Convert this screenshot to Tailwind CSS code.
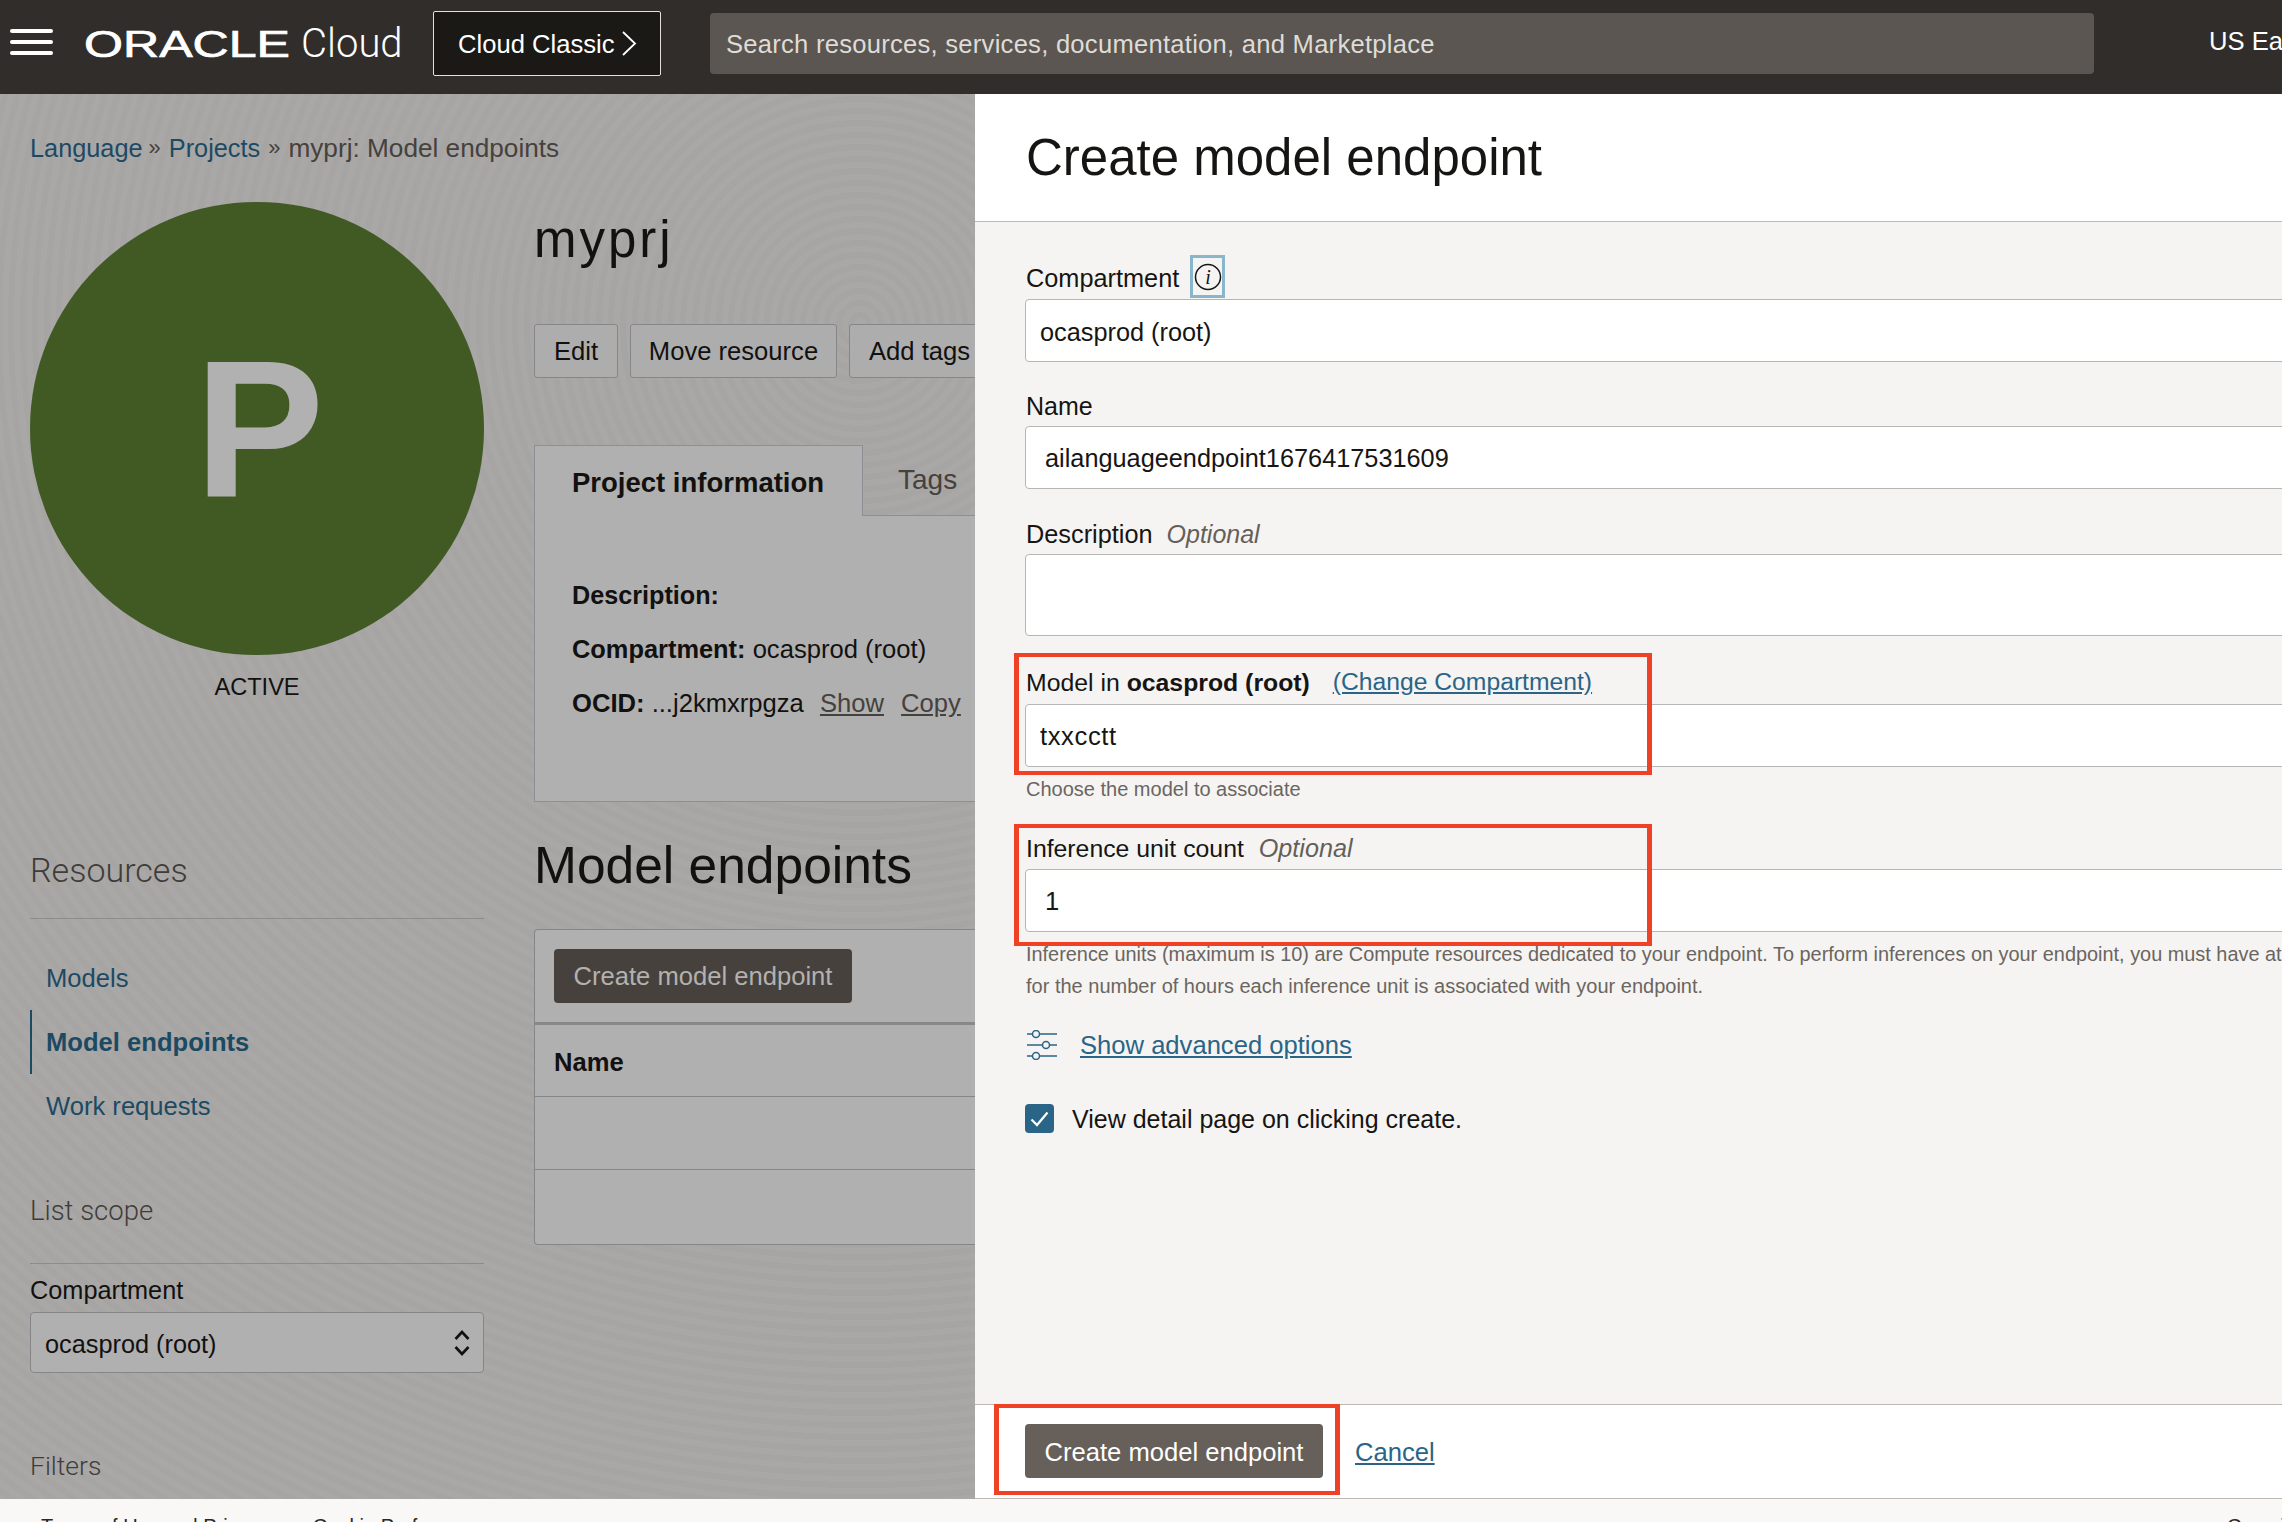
<!DOCTYPE html>
<html lang="en">

<head>
  <meta charset="UTF-8">
  <meta name="viewport" content="width=device-width, initial-scale=1.0">
  <title>Create model endpoint</title>
  <script src="https://cdn.jsdelivr.net/npm/@tailwindcss/browser@4"></script>
</head>

<body class="h-[1522px] w-[2282px] overflow-hidden flex flex-col bg-[#f9f8f6] text-[#161513] text-[25.6px] leading-[30px] font-['Liberation_Sans',Arial,sans-serif]">

  <!-- top bar -->
  <header class="h-[94px] shrink-0 flex items-center bg-[#312d2a] text-white overflow-hidden">
    <div class="ml-[10px] mb-[10px] w-[43px] shrink-0 flex flex-col gap-[7.5px]">
      <span class="h-[3.5px] rounded-full bg-white"></span>
      <span class="h-[3.5px] rounded-full bg-white"></span>
      <span class="h-[3.5px] rounded-full bg-white"></span>
    </div>
    <svg class="ml-[31px] mb-[6px] shrink-0" width="206" height="44" viewBox="0 0 206 44">
      <text x="0" y="35" textLength="206" lengthAdjust="spacingAndGlyphs" font-size="36" font-weight="400" stroke="#fff" stroke-width="0.7" fill="#fff" font-family="Liberation Sans">ORACLE</text>
    </svg>
    <span class="ml-[11px] mb-[6px] w-[132px] shrink-0 text-[40px] leading-[44px] font-light font-['Roboto',sans-serif]">Cloud</span>
    <div class="w-[228px] h-[65px] mb-[7px] shrink-0 flex items-center pl-[24px] rounded-[2px] border border-[#e4e1dc] bg-[#1b1916]">
      <span class="whitespace-nowrap">Cloud Classic</span>
      <svg class="ml-[7px]" width="16" height="25" viewBox="0 0 16 25" fill="none" stroke="#fff" stroke-width="1.8"><path d="M2 1l12 11.500L2 24" /></svg>
    </div>
    <div class="ml-[49px] w-[1384px] h-[61px] mb-[7px] shrink-0 flex items-center pl-[16px] rounded-[4px] bg-[#5b5652] text-[#dfdcd7] tracking-[0.25px] whitespace-nowrap">Search resources, services, documentation, and Marketplace</div>
    <span class="ml-[115px] mb-[12px] shrink-0 whitespace-nowrap">US East (Ashburn)</span>
  </header>

  <div class="relative flex-1 overflow-hidden">
    <!-- dimmed page behind the drawer -->
    <main class="flex h-full pl-[30px] text-[#121110] bg-[#a8a7a6] bg-[repeating-radial-gradient(circle_at_860px_230px,rgba(255,255,255,0.01)_0,rgba(255,255,255,0.01)_6px,rgba(0,0,0,0.01)_6px,rgba(0,0,0,0.01)_12px)]">
      <aside class="w-[454px] shrink-0 pt-[39px]">
        <nav class="flex items-center whitespace-nowrap text-[#1d4a63]">
          <span class="text-[25.300px]">Language</span><span class="mx-[6px] text-[22px] text-[#45413d]">»</span><span class="ml-[2px] text-[25.300px]">Projects</span><span class="mx-[8px] text-[22px] text-[#45413d]">»</span><span class="text-[26.200px] text-[#45413d]">myprj: Model endpoints</span>
        </nav>
        <div class="mt-[39px] w-[454px] h-[453px] rounded-full bg-[#415a24] flex items-center justify-center text-[194px] leading-none font-bold text-[#b1b1b1] pl-[5px]">P</div>
        <p class="mt-[17px] text-center text-[23.600px]">ACTIVE</p>

        <h3 class="mt-[148px] pb-[28px] border-b border-[#8b8c8e] text-[34px] leading-[40px] font-light text-[#3f3c39] font-['Roboto',sans-serif]">Resources</h3>
        <ul class="mt-[27px] text-[#1d4a63]">
          <li class="h-[64px] flex items-center pl-[16px]">Models</li>
          <li class="h-[64px] flex items-center pl-[14px] border-l-2 border-[#1d4a63] font-bold">Model endpoints</li>
          <li class="h-[64px] flex items-center pl-[16px]">Work requests</li>
        </ul>

        <h3 class="mt-[53px] pb-[32px] border-b border-[#8b8c8e] text-[27.500px] leading-[40px] font-light text-[#3f3c39] font-['Roboto',sans-serif]">List scope</h3>
        <label class="block mt-[11px] text-[25.300px]">Compartment</label>
        <div class="mt-[7px] h-[61px] pl-[14px] pr-[13px] pt-[2px] flex items-center justify-between rounded-[4px] border border-[#85868a] bg-[#b0b0b0]">
          <span class="text-[25.300px]">ocasprod (root)</span>
          <svg class="mb-[2px]" width="16" height="26" viewBox="0 0 16 26" fill="none" stroke="#121110" stroke-width="2.600"><path d="M1.500 9L8 2l6.500 7M1.500 17L8 24l6.500-7" /></svg>
        </div>
        <h3 class="mt-[73px] text-[26.500px] leading-[40px] font-light text-[#3f3c39] font-['Roboto',sans-serif]">Filters</h3>
      </aside>

      <section class="ml-[50px] w-[900px] pt-[116px]">
        <h1 class="text-[51px] leading-[60px] tracking-[3px]">myprj</h1>
        <div class="mt-[54px] flex gap-[12px]">
          <span class="h-[54px] w-[84px] flex items-center justify-center rounded-[3px] border border-[#85868a] bg-[#adadad]">Edit</span>
          <span class="h-[54px] w-[207px] flex items-center justify-center rounded-[3px] border border-[#85868a] bg-[#adadad]">Move resource</span>
          <span class="h-[54px] w-[150px] flex items-center pl-[19px] rounded-[3px] border border-[#85868a] bg-[#adadad]">Add tags</span>
        </div>

        <div class="mt-[67px] w-[441px]">
          <div class="flex h-[71px]">
            <div class="w-[329px] pl-[37px] pt-[22px] border-t border-x border-[#8d8f95] bg-[#b0b0b0] font-bold text-[27.500px]">Project information</div>
            <div class="flex-1 pl-[35px] pt-[20px] border-b border-[#8d8f95] text-[28px] text-[#45413d]">Tags</div>
          </div>
          <div class="h-[286px] pl-[37px] pt-[64px] border-l border-b border-[#8d8f95] bg-[#b0b0b0] flex flex-col gap-[23.500px] whitespace-nowrap">
            <p class="font-bold text-[25.200px]">Description:</p>
            <p><b class="text-[25.400px]">Compartment:</b> ocasprod (root)</p>
            <p class="pt-[1px]"><b>OCID:</b> ...j2kmxrpgza <a class="ml-[9px] underline text-[#45413d]">Show</a> <a class="ml-[10px] underline text-[#45413d]">Copy</a></p>
          </div>
        </div>

        <h2 class="mt-[33px] text-[51.500px] leading-[60px]">Model endpoints</h2>
        <div class="mt-[34px] w-[441px] h-[316px] rounded-l-[4px] border border-r-0 border-[#85868a] bg-[#b0b0b0]">
          <div class="h-[95px] pt-[19px] pl-[19px] border-b-[3px] border-[#888888]">
            <span class="h-[54px] w-[298px] flex items-center justify-center rounded-[4px] bg-[#47413e] text-[#b3b1ae]">Create model endpoint</span>
          </div>
          <div class="h-[72px] flex items-center pl-[19px] pt-[2px] border-b border-[#85868a] font-bold">Name</div>
          <div class="h-[73px] border-b border-[#85868a]"></div>
        </div>
      </section>
    </main>

    <!-- create drawer, sits on top of the page -->
    <div class="absolute left-[975px] top-0 bottom-0 right-0 flex flex-col overflow-hidden bg-[#f5f4f2]">
      <div class="h-[128px] shrink-0 pt-[34px] pl-[51px] bg-white border-b border-[#bdbab5]">
        <h2 class="text-[51px] leading-[60px] whitespace-nowrap">Create model endpoint</h2>
      </div>

      <form class="flex-1 pl-[50px] pt-[33px] w-[1420px]">
        <div class="h-[43px] pl-[1px] flex items-center">
          <label class="w-[164px] pt-[2px] text-[25.300px]">Compartment</label>
          <span class="w-[35px] h-[43px] flex items-center justify-center border-[3px] border-[#8ab6cb]">
            <svg width="28" height="28" viewBox="0 0 28 28" fill="none"><circle cx="14" cy="14" r="12.500" stroke="#161513" stroke-width="1.500" /><text x="14" y="20.500" text-anchor="middle" font-size="20" font-style="italic" fill="#161513" font-family="Liberation Serif">i</text></svg>
          </span>
        </div>
        <div class="mt-[1px] h-[63px] flex items-center pl-[14px] pt-[2px] rounded-[4px] border border-[#b8b6b2] bg-white text-[25.300px]">ocasprod (root)</div>

        <label class="block mt-[29px] ml-[1px] text-[25px]">Name</label>
        <div class="mt-[5px] h-[63px] flex items-center pl-[19px] rounded-[4px] border border-[#b8b6b2] bg-white text-[25.300px]">ailanguageendpoint1676417531609</div>

        <label class="block mt-[30px] ml-[1px] text-[25.300px]">Description <i class="ml-[7px] text-[#655f5a] text-[25px]">Optional</i></label>
        <div class="mt-[5px] h-[82px] rounded-[4px] border border-[#b8b6b2] bg-white"></div>

        <label class="block mt-[32px] ml-[1px] text-[24.800px]">Model in <b>ocasprod (root)</b> <a class="ml-[16px] underline text-[#2a6587] text-[24.700px] relative bottom-[1px]">(Change Compartment)</a></label>
        <div class="mt-[6px] h-[63px] flex items-center pl-[14px] rounded-[4px] border border-[#b8b6b2] bg-white tracking-[0.6px]">txxcctt</div>
        <p class="mt-[8px] ml-[1px] text-[20px] leading-[28px] text-[#6b6560]">Choose the model to associate</p>

        <label class="block mt-[30px] ml-[1px] text-[24.800px]">Inference unit count <i class="ml-[8px] text-[#655f5a] text-[25.200px]">Optional</i></label>
        <div class="mt-[5px] h-[63px] flex items-center pl-[19px] rounded-[4px] border border-[#b8b6b2] bg-white">1</div>
        <div class="mt-[6px] ml-[1px] text-[20px] leading-[32px] text-[#6b6560] whitespace-nowrap">
          <p class="text-[19.900px]">Inference units (maximum is 10) are Compute resources dedicated to your endpoint. To perform inferences on your endpoint, you must have at</p>
          <p>for the number of hours each inference unit is associated with your endpoint.</p>
        </div>

        <div class="mt-[28px] h-[30px] flex items-center">
          <svg class="ml-[1px]" width="32" height="30" viewBox="0 0 32 30" fill="none" stroke="#2a6587" stroke-width="1.500">
            <path d="M1 4h5M14 4h17M1 15h15M24 15h7M1 26h5M14 26h17" />
            <circle cx="10" cy="4" r="3.500" /><circle cx="20" cy="15" r="3.500" /><circle cx="10" cy="26" r="3.500" />
          </svg>
          <a class="ml-[22px] underline text-[#2a6587]">Show advanced options</a>
        </div>

        <div class="mt-[44px] h-[29px] flex items-center">
          <span class="w-[29px] h-[29px] flex items-center justify-center rounded-[4px] bg-[#2a6587]">
            <svg width="19" height="16" viewBox="0 0 19 16" fill="none" stroke="#fff" stroke-width="2.200"><path d="M1.500 8.500l5.500 5.500L17.500 1.500" /></svg>
          </span>
          <span class="ml-[18px] text-[25px]">View detail page on clicking create.</span>
        </div>
      </form>

      <div class="h-[95px] shrink-0 flex items-start pl-[50px] pt-[19px] gap-[32px] bg-white border-y border-[#bdb8b2]">
        <button class="h-[54px] w-[298px] pt-[2px] rounded-[4px] bg-[#665f5a] text-white">Create model endpoint</button>
        <a class="mt-[13px] underline text-[#2a6587]">Cancel</a>
      </div>

      <!-- red callouts added to the screenshot -->
      <div class="absolute left-[39px] top-[559px] w-[638px] h-[122px] border-x-[5px] border-y-[4px] border-[#ef4126]"></div>
      <div class="absolute left-[39px] top-[730px] w-[638px] h-[122px] border-x-[5px] border-y-[4px] border-[#ef4126]"></div>
      <div class="absolute left-[19px] top-[1310px] w-[346px] h-[91px] border-x-[5px] border-y-[4px] border-[#ef4126]"></div>
    </div>
  </div>

  <footer class="relative h-[23px] shrink-0 flex pl-[41px] pt-[15px] text-[20px] leading-[24px] overflow-hidden bg-[#f9f8f6] text-[#2b2825] whitespace-nowrap">
    <span>Terms of Use and Privacy</span>
    <span class="ml-[44px]">Cookie Preferences</span>
    <span class="absolute left-[2227px] top-[15px]">Copyright</span>
  </footer>

</body>

</html>
